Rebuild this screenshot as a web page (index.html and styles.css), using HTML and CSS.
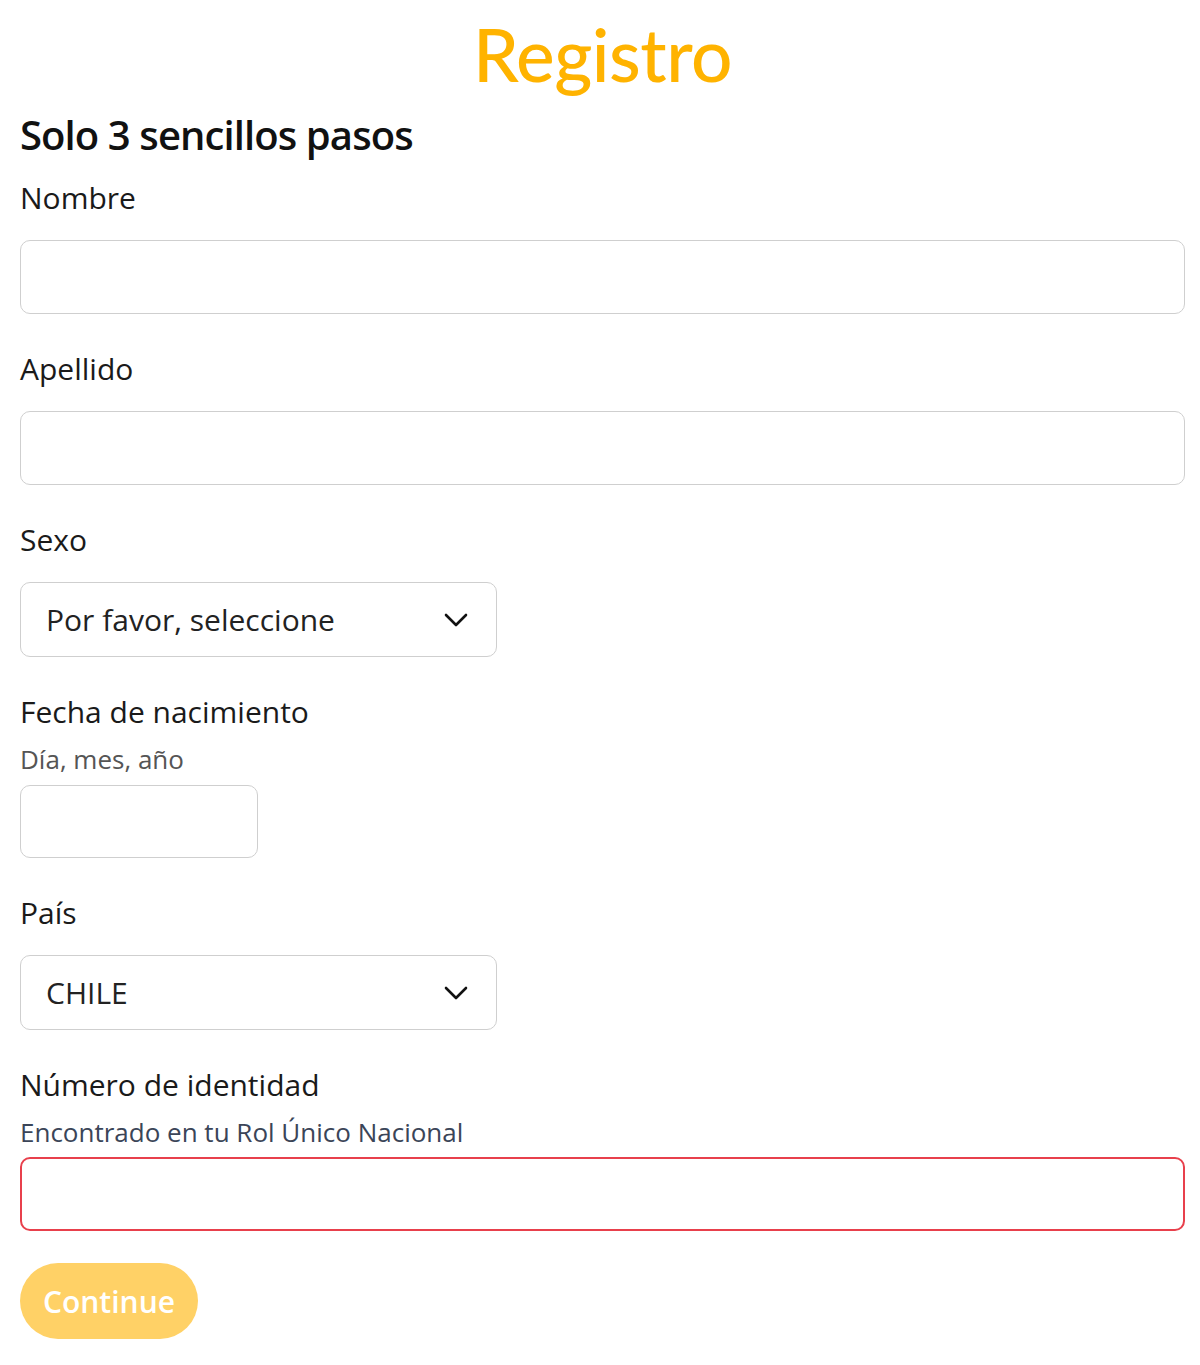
FILE: index.html
```html
<!DOCTYPE html>
<html lang="es">
<head>
<meta charset="utf-8">
<title>Registro</title>
<link rel="stylesheet" href="styles.css">
</head>
<body>
<main class="page">
  <h1 class="title">Registro</h1>
  <h2 class="subtitle">Solo 3 sencillos pasos</h2>
  <form class="form">
    <div class="field">
      <label class="label" for="nombre">Nombre</label>
      <input class="input" id="nombre" type="text">
    </div>
    <div class="field">
      <label class="label" for="apellido">Apellido</label>
      <input class="input" id="apellido" type="text">
    </div>
    <div class="field">
      <label class="label" for="sexo">Sexo</label>
      <div class="select">
        <span class="select-text">Por favor, seleccione</span>
        <svg class="chevron" viewBox="0 0 24 16" width="24" height="16"><path d="M2 3 L12 13 L22 3" fill="none" stroke="#111" stroke-width="2.6" stroke-linecap="round" stroke-linejoin="round"/></svg>
      </div>
    </div>
    <div class="field">
      <label class="label" for="fecha">Fecha de nacimiento</label>
      <span class="hint">Día, mes, año</span>
      <input class="input input-date" id="fecha" type="text">
    </div>
    <div class="field">
      <label class="label" for="pais">País</label>
      <div class="select">
        <span class="select-text">CHILE</span>
        <svg class="chevron" viewBox="0 0 24 16" width="24" height="16"><path d="M2 3 L12 13 L22 3" fill="none" stroke="#111" stroke-width="2.6" stroke-linecap="round" stroke-linejoin="round"/></svg>
      </div>
    </div>
    <div class="field">
      <label class="label" for="rut">Número de identidad</label>
      <span class="hint hint-blue">Encontrado en tu Rol Único Nacional</span>
      <input class="input input-error" id="rut" type="text">
    </div>
    <button class="button" type="button">Continue</button>
  </form>
</main>
</body>
</html>
```

FILE: styles.css
```css
* { box-sizing: border-box; }
html, body { margin: 0; padding: 0; background: #fff; }
body {
  font-family: "Open Sans", "Noto Sans", sans-serif;
  color: #1a1a1a;
}
.page {
  padding: 0 15px 0 20px;
}
.title {
  margin: 0;
  padding-top: 12px;
  text-align: center;
  font-family: Lato, "Open Sans", sans-serif;
  font-weight: 500;
  font-size: 73px;
  line-height: 84px;
  color: #ffb300;
  letter-spacing: -0.5px;
}
.subtitle {
  margin: 14px 0 0;
  font-size: 40px;
  line-height: 50px;
  font-weight: 600;
  color: #111;
  letter-spacing: -0.9px;
}
.form { display: flex; flex-direction: column; }
.field {
  display: flex;
  flex-direction: column;
  align-items: flex-start;
  margin-top: 35px;
}
.field:first-child { margin-top: 18px; }
.label {
  font-size: 30px;
  line-height: 40px;
  color: #1a1a1a;
  margin-bottom: 22px;
}
.hint {
  font-size: 26px;
  line-height: 32px;
  color: #555;
  margin-top: -11px;
  margin-bottom: 10px;
}
.hint-blue { color: #3b4558; margin-bottom: 9px; }
.input {
  width: 100%;
  height: 74px;
  border: 1.5px solid #cfcfcf;
  border-radius: 10px;
  background: #fff;
  font: inherit;
}
.input-date { width: 238px; height: 73px; }
.input-error { border-color: #e8404c; border-width: 2px; }
.select {
  width: 477px;
  height: 75px;
  border: 1.5px solid #cfcfcf;
  border-radius: 10px;
  display: flex;
  align-items: center;
  justify-content: space-between;
  padding: 0 28px 0 25px;
}
.select-text {
  font-size: 30px;
  color: #222;
}
.chevron { display: block; }
.button {
  margin-top: 32px;
  align-self: flex-start;
  width: 178px;
  height: 76px;
  border: none;
  border-radius: 38px;
  background: #ffd166;
  color: #fff;
  font-family: "Open Sans", sans-serif;
  font-weight: 600;
  font-size: 30px;
  padding: 0;
}
```
